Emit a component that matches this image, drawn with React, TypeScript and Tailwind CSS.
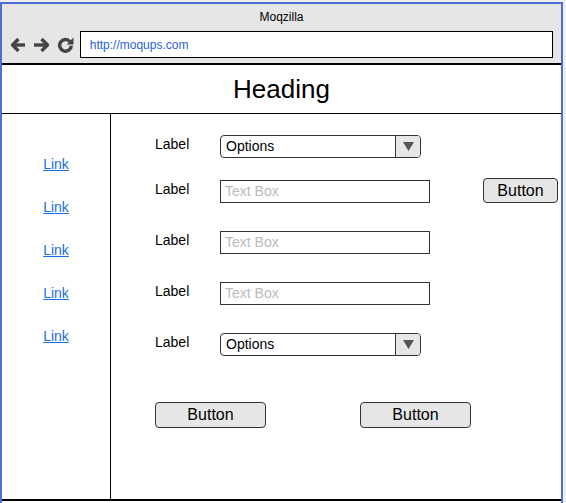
const font = { fontFamily: '"Liberation Sans", Arial, sans-serif' };

function Select() {
  return (
    <div className="flex h-[23px] w-[201px] overflow-hidden rounded-[4px] border border-[#333] bg-white">
      <div className="flex flex-1 items-center pl-[5px] text-[14px] text-black">Options</div>
      <div className="flex w-[25px] items-center justify-center border-l border-[#333] bg-[#e6e6e6]">
        <svg width="11" height="9" viewBox="0 0 11 9">
          <path d="M0 0 L11 0 L5.5 9 Z" fill="#555" />
        </svg>
      </div>
    </div>
  );
}

function TextBox() {
  return (
    <div className="flex h-[23px] w-[210px] items-center border border-[#333] bg-white pl-[4px] text-[14px] text-[#bbbbbb]">
      Text Box
    </div>
  );
}

function Button({ className }: { className: string }) {
  return (
    <div
      className={
        "flex items-center justify-center rounded-[4px] border border-[#333] bg-[#e6e6e6] text-[16px] text-black " +
        className
      }
    >
      Button
    </div>
  );
}

function Label() {
  return <div className="mt-[1px] w-[65px] shrink-0 text-[14px] leading-[16px] text-black">Label</div>;
}

export default function App() {
  const links = ["Link", "Link", "Link", "Link", "Link"];
  return (
    <div className="h-[503px] w-[566px] overflow-hidden bg-[#efefef]" style={font}>
      <div className="mt-[2px] h-[560px] w-[563px] border-x-2 border-t-2 border-[#4f6fd8] bg-white">
        {/* browser chrome */}
        <div className="border-b-2 border-black bg-[#e6e6e6] px-[8px] pb-[5px] pt-[5px]">
          <div className="text-center text-[12px] leading-[16px] text-black">Moqzilla</div>
          <div className="mt-[6px] flex items-center">
            <div className="flex w-[70px] items-center gap-[7px]">
              <svg width="16" height="16" viewBox="0 0 16 16" fill="none" stroke="#444" strokeWidth="3.4" strokeLinejoin="round">
                <path d="M8.5 2 L2.5 8 L8.5 14" />
                <path d="M3 8 H15" />
              </svg>
              <svg width="17" height="16" viewBox="0 0 17 16" fill="none" stroke="#444" strokeWidth="3.4" strokeLinejoin="round">
                <path d="M8.5 2 L14.5 8 L8.5 14" />
                <path d="M1 8 H14" />
              </svg>
              <svg width="17" height="17" viewBox="0 0 16 16">
                <path d="M12.2 5.2 A5.5 5.5 0 1 0 13.5 9" fill="none" stroke="#444" strokeWidth="3.2" />
                <path d="M15.5 1.5 L15.5 8 L9 8 Z" fill="#444" />
              </svg>
            </div>
            <div className="flex h-[27px] w-[475px] items-center border border-black bg-white pl-[9px] text-[12px] text-[#2a5fe0]">
              http://moqups.com
            </div>
          </div>
        </div>

        {/* heading */}
        <div className="flex h-[49px] items-center justify-center border-b border-black text-[26px] text-black">
          Heading
        </div>

        {/* body */}
        <div className="flex h-[387px] border-b-2 border-black">
          <div className="flex w-[109px] shrink-0 flex-col items-center gap-[27px] border-r border-black pt-[42px]">
            {links.map((l, i) => (
              <a key={i} href="#" className="text-[14px] leading-[16px] text-[#1a6ee6] underline">
                {l}
              </a>
            ))}
          </div>

          <div className="flex flex-1 flex-col pl-[44px] pt-[21px]">
            <div className="flex items-start">
              <Label />
              <Select />
            </div>

            <div className="mt-[20px] flex h-[24px] items-start">
              <div className="mt-[2px] flex">
                <Label />
                <TextBox />
              </div>
              <Button className="ml-[53px] h-[25px] w-[75px]" />
            </div>

            <div className="mt-[29px] flex items-start">
              <Label />
              <TextBox />
            </div>

            <div className="mt-[28px] flex items-start">
              <Label />
              <TextBox />
            </div>

            <div className="mt-[28px] flex items-start">
              <Label />
              <Select />
            </div>

            <div className="mt-[46px] flex gap-[94px]">
              <Button className="h-[26px] w-[111px]" />
              <Button className="h-[26px] w-[111px]" />
            </div>
          </div>
        </div>
      </div>
    </div>
  );
}
